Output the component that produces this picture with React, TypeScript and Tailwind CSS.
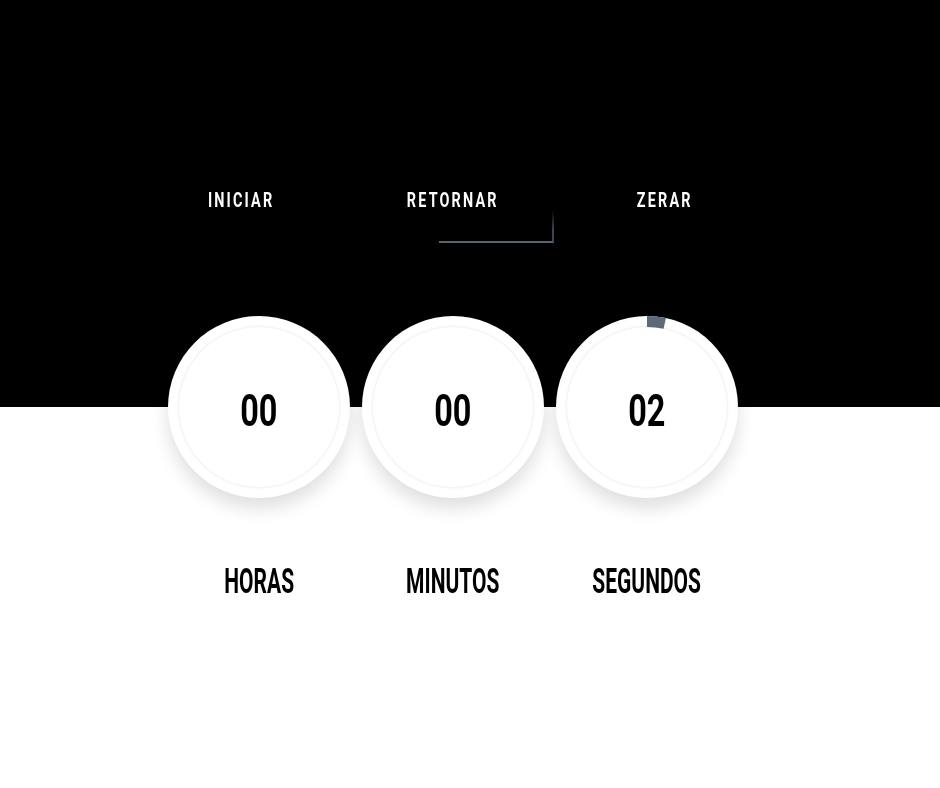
import React from "react";

const font = { fontFamily: "Roboto, 'Liberation Sans', sans-serif" };

const units = [
  { value: "00", label: "HORAS", progress: 0 },
  { value: "00", label: "MINUTOS", progress: 0 },
  { value: "02", label: "SEGUNDOS", progress: 2 / 60 },
];

const Dial = ({ value, progress }: { value: string; progress: number }) => {
  const r = 85.5;
  const circ = 2 * Math.PI * r;
  return (
    <div className="relative w-[182px] h-[182px] rounded-full bg-white shadow-[0_10px_18px_rgba(0,0,0,0.13)] flex items-center justify-center">
      {progress > 0 && (
        <svg className="absolute inset-0" width="182" height="182" viewBox="0 0 182 182">
          <circle
            cx="91"
            cy="91"
            r={r}
            fill="none"
            stroke="#5b6978"
            strokeWidth="11"
            strokeDasharray={`${circ * progress} ${circ}`}
            transform="rotate(-90 91 91)"
          />
        </svg>
      )}
      <div className="w-[160px] h-[160px] rounded-full bg-white shadow-[0_0_3px_rgba(0,0,0,0.13)] flex items-center justify-center pt-[6px]">
        <span className="inline-block scale-x-[0.72] text-[45px] font-bold text-black leading-none" style={font}>
          {value}
        </span>
      </div>
    </div>
  );
};

export default function App() {
  return (
    <div className="min-h-[788px] w-full bg-[linear-gradient(to_bottom,#000_0,#000_407px,#fff_407px,#fff_100%)]">
      <div className="pt-[186px] ml-[135px] w-[636px] grid grid-cols-3 relative">
        {["INICIAR", "RETORNAR", "ZERAR"].map((t) => (
          <div key={t} className="flex justify-center">
            <span
              className="inline-block scale-x-[0.72] text-white text-[20px] font-bold tracking-[3px] leading-[28px]"
              style={font}
            >
              {t}
            </span>
          </div>
        ))}
        <div className="absolute left-[304px] top-[210px] w-[115px] h-[33px] border-r-2 border-b-2 border-r-[#3d4550] border-b-[#5a6470] [mask-image:linear-gradient(to_bottom,transparent,#000_60%)]" />
      </div>

      <div className="mt-[102px] ml-[162px] w-[582px] grid grid-cols-3">
        {units.map((u) => (
          <div key={u.label} className="flex flex-col items-center">
            <Dial value={u.value} progress={u.progress} />
            <span
              className="mt-[66px] inline-block scale-x-[0.6] text-[35px] font-bold text-black leading-none"
              style={font}
            >
              {u.label}
            </span>
          </div>
        ))}
      </div>
    </div>
  );
}
